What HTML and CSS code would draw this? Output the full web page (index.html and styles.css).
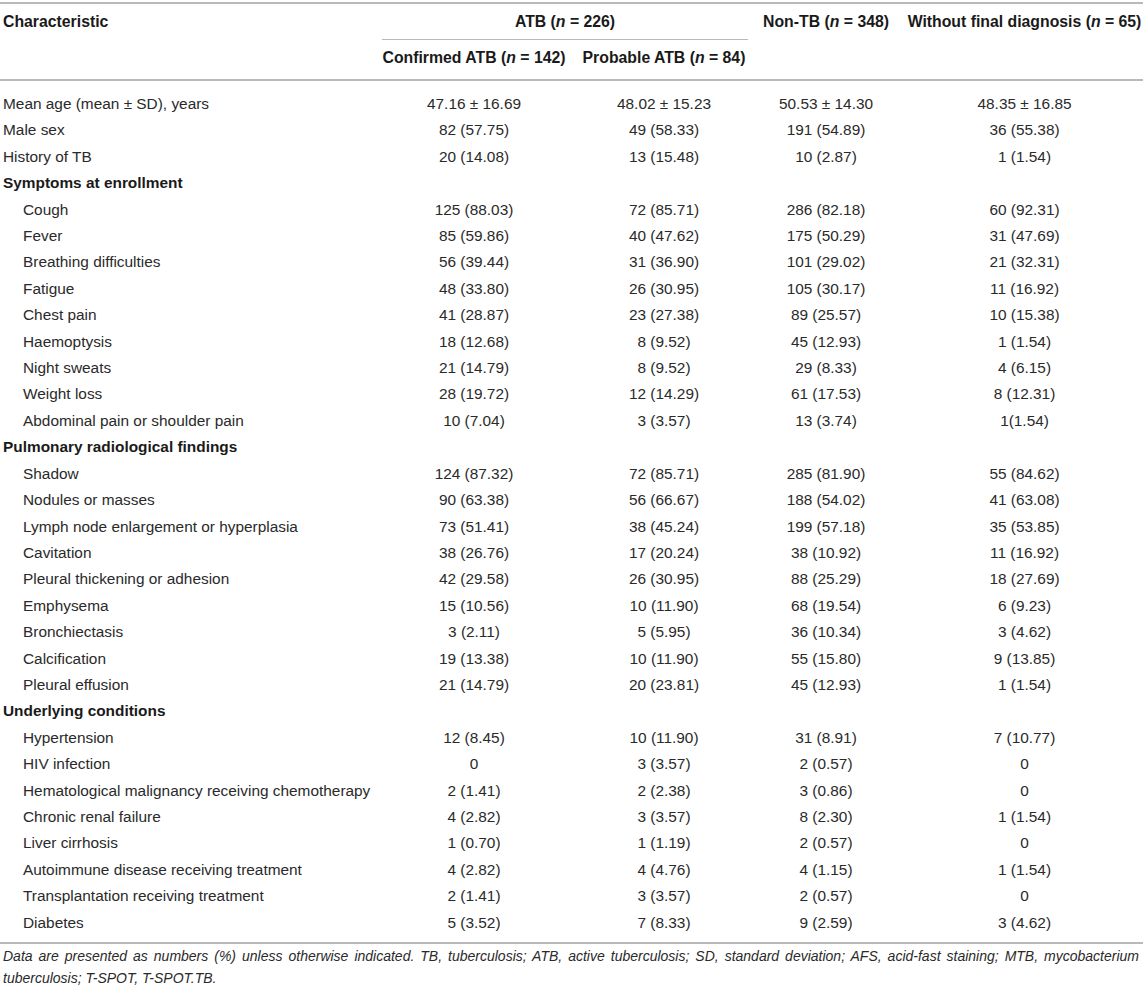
FILE: index.html
```html
<!DOCTYPE html>
<html lang="en">
<head>
<meta charset="utf-8">
<title>Table</title>
<link rel="stylesheet" href="styles.css">
</head>
<body>
<div class="wrap">
<table class="tbl">
  <colgroup>
    <col class="c1"><col class="c2"><col class="c3"><col class="c4"><col class="c5">
  </colgroup>
  <thead>
    <tr class="hr1">
      <th class="left">Characteristic</th>
      <th colspan="2" class="span"><div class="span-label">ATB (<i>n</i> = 226)</div></th>
      <th>Non-TB (<i>n</i> = 348)</th>
      <th class="last-col">Without final diagnosis (<i>n</i> = 65)</th>
    </tr>
    <tr class="hr2">
      <th></th>
      <th>Confirmed ATB (<i>n</i> = 142)</th>
      <th>Probable ATB (<i>n</i> = 84)</th>
      <th></th>
      <th class="last-col"></th>
    </tr>
  </thead>
  <tbody>
    <tr class="first"><td class="lbl">Mean age (mean ± SD), years</td><td>47.16 ± 16.69</td><td>48.02 ± 15.23</td><td>50.53 ± 14.30</td><td class="last-col">48.35 ± 16.85</td></tr>
    <tr><td class="lbl">Male sex</td><td>82 (57.75)</td><td>49 (58.33)</td><td>191 (54.89)</td><td class="last-col">36 (55.38)</td></tr>
    <tr><td class="lbl">History of TB</td><td>20 (14.08)</td><td>13 (15.48)</td><td>10 (2.87)</td><td class="last-col">1 (1.54)</td></tr>
    <tr><td class="lbl sec">Symptoms at enrollment</td><td></td><td></td><td></td><td class="last-col"></td></tr>
    <tr><td class="lbl sub">Cough</td><td>125 (88.03)</td><td>72 (85.71)</td><td>286 (82.18)</td><td class="last-col">60 (92.31)</td></tr>
    <tr><td class="lbl sub">Fever</td><td>85 (59.86)</td><td>40 (47.62)</td><td>175 (50.29)</td><td class="last-col">31 (47.69)</td></tr>
    <tr><td class="lbl sub">Breathing difficulties</td><td>56 (39.44)</td><td>31 (36.90)</td><td>101 (29.02)</td><td class="last-col">21 (32.31)</td></tr>
    <tr><td class="lbl sub">Fatigue</td><td>48 (33.80)</td><td>26 (30.95)</td><td>105 (30.17)</td><td class="last-col">11 (16.92)</td></tr>
    <tr><td class="lbl sub">Chest pain</td><td>41 (28.87)</td><td>23 (27.38)</td><td>89 (25.57)</td><td class="last-col">10 (15.38)</td></tr>
    <tr><td class="lbl sub">Haemoptysis</td><td>18 (12.68)</td><td>8 (9.52)</td><td>45 (12.93)</td><td class="last-col">1 (1.54)</td></tr>
    <tr><td class="lbl sub">Night sweats</td><td>21 (14.79)</td><td>8 (9.52)</td><td>29 (8.33)</td><td class="last-col">4 (6.15)</td></tr>
    <tr><td class="lbl sub">Weight loss</td><td>28 (19.72)</td><td>12 (14.29)</td><td>61 (17.53)</td><td class="last-col">8 (12.31)</td></tr>
    <tr><td class="lbl sub">Abdominal pain or shoulder pain</td><td>10 (7.04)</td><td>3 (3.57)</td><td>13 (3.74)</td><td class="last-col">1(1.54)</td></tr>
    <tr><td class="lbl sec">Pulmonary radiological findings</td><td></td><td></td><td></td><td class="last-col"></td></tr>
    <tr><td class="lbl sub">Shadow</td><td>124 (87.32)</td><td>72 (85.71)</td><td>285 (81.90)</td><td class="last-col">55 (84.62)</td></tr>
    <tr><td class="lbl sub">Nodules or masses</td><td>90 (63.38)</td><td>56 (66.67)</td><td>188 (54.02)</td><td class="last-col">41 (63.08)</td></tr>
    <tr><td class="lbl sub">Lymph node enlargement or hyperplasia</td><td>73 (51.41)</td><td>38 (45.24)</td><td>199 (57.18)</td><td class="last-col">35 (53.85)</td></tr>
    <tr><td class="lbl sub">Cavitation</td><td>38 (26.76)</td><td>17 (20.24)</td><td>38 (10.92)</td><td class="last-col">11 (16.92)</td></tr>
    <tr><td class="lbl sub">Pleural thickening or adhesion</td><td>42 (29.58)</td><td>26 (30.95)</td><td>88 (25.29)</td><td class="last-col">18 (27.69)</td></tr>
    <tr><td class="lbl sub">Emphysema</td><td>15 (10.56)</td><td>10 (11.90)</td><td>68 (19.54)</td><td class="last-col">6 (9.23)</td></tr>
    <tr><td class="lbl sub">Bronchiectasis</td><td>3 (2.11)</td><td>5 (5.95)</td><td>36 (10.34)</td><td class="last-col">3 (4.62)</td></tr>
    <tr><td class="lbl sub">Calcification</td><td>19 (13.38)</td><td>10 (11.90)</td><td>55 (15.80)</td><td class="last-col">9 (13.85)</td></tr>
    <tr><td class="lbl sub">Pleural effusion</td><td>21 (14.79)</td><td>20 (23.81)</td><td>45 (12.93)</td><td class="last-col">1 (1.54)</td></tr>
    <tr><td class="lbl sec">Underlying conditions</td><td></td><td></td><td></td><td class="last-col"></td></tr>
    <tr><td class="lbl sub">Hypertension</td><td>12 (8.45)</td><td>10 (11.90)</td><td>31 (8.91)</td><td class="last-col">7 (10.77)</td></tr>
    <tr><td class="lbl sub">HIV infection</td><td>0</td><td>3 (3.57)</td><td>2 (0.57)</td><td class="last-col">0</td></tr>
    <tr><td class="lbl sub">Hematological malignancy receiving chemotherapy</td><td>2 (1.41)</td><td>2 (2.38)</td><td>3 (0.86)</td><td class="last-col">0</td></tr>
    <tr><td class="lbl sub">Chronic renal failure</td><td>4 (2.82)</td><td>3 (3.57)</td><td>8 (2.30)</td><td class="last-col">1 (1.54)</td></tr>
    <tr><td class="lbl sub">Liver cirrhosis</td><td>1 (0.70)</td><td>1 (1.19)</td><td>2 (0.57)</td><td class="last-col">0</td></tr>
    <tr><td class="lbl sub">Autoimmune disease receiving treatment</td><td>4 (2.82)</td><td>4 (4.76)</td><td>4 (1.15)</td><td class="last-col">1 (1.54)</td></tr>
    <tr><td class="lbl sub">Transplantation receiving treatment</td><td>2 (1.41)</td><td>3 (3.57)</td><td>2 (0.57)</td><td class="last-col">0</td></tr>
    <tr class="last"><td class="lbl sub">Diabetes</td><td>5 (3.52)</td><td>7 (8.33)</td><td>9 (2.59)</td><td class="last-col">3 (4.62)</td></tr>
  </tbody>
</table>
<p class="note">Data are presented as numbers (%) unless otherwise indicated. TB, tuberculosis; ATB, active tuberculosis; SD, standard deviation; AFS, acid-fast staining; MTB, mycobacterium tuberculosis; T-SPOT, T-SPOT.TB.</p>
</div>
</body>
</html>
```

FILE: styles.css
```css
html, body {
  margin: 0;
  padding: 0;
  background: #ffffff;
}

.wrap {
  width: 1143px;
  padding-top: 2px;
  font-family: "Liberation Sans", Arial, Helvetica, sans-serif;
  color: #222222;
}

.tbl {
  width: 1143px;
  table-layout: fixed;
  border-collapse: separate;
  border-spacing: 0;
  font-size: 15.4px;
}

.c1 { width: 374px; }
.c2 { width: 200px; }
.c3 { width: 180px; }
.c4 { width: 144px; }
.c5 { width: 245px; }

.tbl th {
  font-weight: bold;
  font-size: 15.8px;
  text-align: center;
  padding: 0;
  white-space: nowrap;
  color: #1a1a1a;
}

.tbl th.left {
  text-align: left;
  padding-left: 3px;
}

.hr1 th {
  border-top: 2px solid #b9b9b9;
  height: 36px;
  line-height: 36px;
  vertical-align: top;
}

.hr1 th.span {
  padding: 0 6px 0 8px;
}

.span-label {
  line-height: 35px;
  border-bottom: 1px solid #b9b9b9;
}

.hr2 th {
  padding: 8px 0 11px;
  line-height: 20px;
  border-bottom: 2px solid #b9b9b9;
}

.tbl td {
  padding: 0;
  line-height: 26.4px;
  text-align: center;
  white-space: nowrap;
  color: #2a2a2a;
}

.tbl .last-col {
  padding-left: 8px;
}

.tbl td.lbl {
  text-align: left;
  padding-left: 3px;
}

.tbl td.sub {
  padding-left: 23px;
}

.tbl td.sec {
  font-weight: bold;
  color: #1a1a1a;
}

.first td {
  padding-top: 10px;
}

.last td {
  padding-bottom: 6px;
  border-bottom: 2px solid #b9b9b9;
}

.note {
  margin: 0;
  padding: 1px 4px 0 3px;
  font-size: 14px;
  line-height: 22px;
  font-style: italic;
  color: #2a2a2a;
  text-align: justify;
}
```
